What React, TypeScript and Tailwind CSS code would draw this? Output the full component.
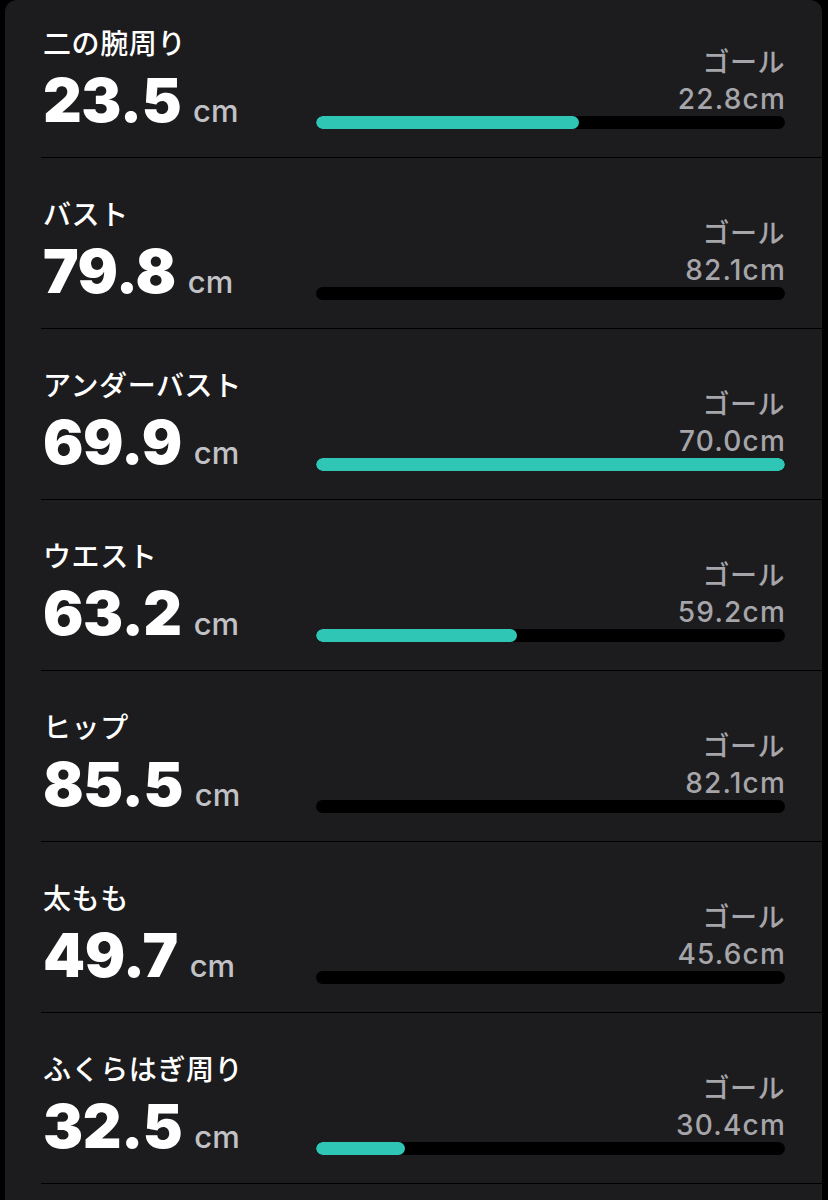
import React from "react";

type Row = { label: string; value: string; goal: string; fill: number };

const rows: Row[] = [
  { label: "二の腕周り", value: "23.5", goal: "22.8cm", fill: 56.1 },
  { label: "バスト", value: "79.8", goal: "82.1cm", fill: 0 },
  { label: "アンダーバスト", value: "69.9", goal: "70.0cm", fill: 100 },
  { label: "ウエスト", value: "63.2", goal: "59.2cm", fill: 42.9 },
  { label: "ヒップ", value: "85.5", goal: "82.1cm", fill: 0 },
  { label: "太もも", value: "49.7", goal: "45.6cm", fill: 0 },
  { label: "ふくらはぎ周り", value: "32.5", goal: "30.4cm", fill: 19 },
];

const jp = { fontFamily: "Inter, 'Noto Sans CJK JP', sans-serif" };

function MeasureRow({ row }: { row: Row }) {
  return (
    <div className="h-[171px] flex flex-col">
      <div className="flex flex-1 pl-[38px] pr-[37px]">
        <div className="w-[273px] flex flex-col pt-[40px]">
          <div className="text-white text-[28px] leading-[34px] font-medium tracking-[0.6px]" style={jp}>
            {row.label}
          </div>
          <div className="mt-[9px] flex items-baseline whitespace-nowrap">
            <span className="text-white text-[60px] leading-[60px] font-black tracking-[-0.5px]" style={jp}>
              {row.value}
            </span>
            <span className="ml-[12px] text-[#c2c2c6] text-[31px] leading-[30px] font-medium" style={jp}>
              cm
            </span>
          </div>
        </div>
        <div className="flex-1 flex flex-col items-end pt-[60px]">
          <div className="text-[#a5a5aa] text-[27px] leading-[32px] font-medium tracking-[0.5px]" style={jp}>
            ゴール
          </div>
          <div className="mt-[4px] -mr-[1px] text-[#a5a5aa] text-[28px] leading-[32px] font-medium tracking-[1.2px]" style={jp}>
            {row.goal}
          </div>
          <div className="mt-[1px] w-full h-[13px] rounded-full bg-black overflow-hidden">
            {row.fill > 0 && (
              <div className="h-full rounded-full bg-[#30c6b6]" style={{ width: `${row.fill}%` }} />
            )}
          </div>
        </div>
      </div>
      <div className="ml-[36px] h-px bg-black" />
    </div>
  );
}

export default function App() {
  return (
    <div className="w-[828px] h-[1200px] bg-black overflow-hidden">
      <div className="ml-[5px] w-[817px] h-[1200px] bg-[#1c1c1e] rounded-t-[12px] overflow-hidden">
        <div className="-mt-[13px]">
          {rows.map((r) => (
            <MeasureRow key={r.label} row={r} />
          ))}
        </div>
      </div>
    </div>
  );
}
